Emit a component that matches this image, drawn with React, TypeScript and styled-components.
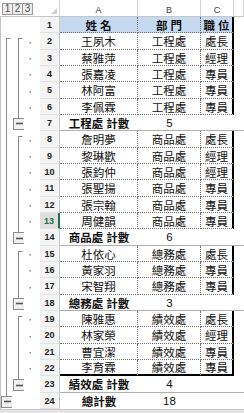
import styled, { createGlobalStyle, css } from "styled-components";

type Lane = "none" | "start" | "line" | "minus" | "dot";
type Kind = "head" | "detail" | "sub" | "total";

type RowData = {
  n: number;
  a: string;
  b?: string;
  c?: string;
  kind: Kind;
  l1: Lane;
  l2: Lane;
  l3: Lane;
  last?: boolean;
};

const groups = [
  {
    dept: "工程處",
    people: [
      ["王夙木", "處長"],
      ["蔡雅萍", "經理"],
      ["張嘉凌", "專員"],
      ["林阿富", "專員"],
      ["李佩霖", "專員"],
    ],
  },
  {
    dept: "商品處",
    people: [
      ["詹明夢", "處長"],
      ["黎琳歡", "經理"],
      ["張鈞仲", "經理"],
      ["張聖揚", "專員"],
      ["張宗翰", "專員"],
      ["周健韻", "專員"],
    ],
  },
  {
    dept: "總務處",
    people: [
      ["杜依心", "處長"],
      ["黃家羽", "專員"],
      ["宋智翔", "專員"],
    ],
  },
  {
    dept: "績效處",
    people: [
      ["陳雅惠", "處長"],
      ["林家榮", "經理"],
      ["曹宜潔", "專員"],
      ["李育霖", "專員"],
    ],
  },
];

function buildRows(): RowData[] {
  const rows: RowData[] = [
    { n: 1, a: "姓 名", b: "部 門", c: "職 位", kind: "head", l1: "none", l2: "none", l3: "none" },
  ];
  let n = 2;
  let total = 0;
  groups.forEach((g, gi) => {
    g.people.forEach(([name, title], i) => {
      rows.push({
        n: n++,
        a: name,
        b: g.dept,
        c: title,
        kind: "detail",
        l1: n === 3 ? "start" : "line",
        l2: i === 0 ? "start" : "line",
        l3: "dot",
        last: gi === groups.length - 1 && i === g.people.length - 1,
      });
    });
    total += g.people.length;
    rows.push({
      n: n++,
      a: `${g.dept} 計數`,
      b: String(g.people.length),
      kind: "sub",
      l1: "line",
      l2: "minus",
      l3: "none",
    });
  });
  rows.push({ n: n++, a: "總計數", b: String(total), kind: "total", l1: "minus", l2: "none", l3: "none" });
  return rows;
}

const ROWS = buildRows();
const rowHeight = (i: number) => Math.round((i + 1) * 16.33) - Math.round(i * 16.33);

const GlobalStyle = createGlobalStyle`
  html, body {
    margin: 0;
    padding: 0;
    background: #ffffff;
    overflow: hidden;
  }
  body {
    font-family: "Liberation Sans", "Noto Sans CJK TC", sans-serif;
  }
`;

const Sheet = styled.div`
  width: 244px;
  height: 413px;
  display: flex;
  flex-direction: column;
  background: #fff;
`;

const HeaderRow = styled.div`
  display: flex;
  height: 17px;
  flex-shrink: 0;
  border-bottom: 1px solid #c6c6c6;
  box-sizing: border-box;
`;

const LevelBar = styled.div`
  width: 40px;
  display: flex;
  align-items: flex-start;
  padding: 3px 0 0 2px;
  box-sizing: border-box;
`;

const LevelButton = styled.div`
  width: 11px;
  height: 12px;
  box-sizing: border-box;
  border: 1px solid #9a9a9a;
  margin-left: -1px;
  background: #ececec;
  color: #505050;
  font-size: 10px;
  line-height: 10px;
  text-align: center;

  &:first-child {
    margin-left: 0;
  }
`;

const Corner = styled.div`
  width: 20px;
  display: flex;
  align-items: flex-end;
  justify-content: flex-end;
  padding: 0 2px 2px 0;
  box-sizing: border-box;
  border-right: 1px solid #d4d4d4;
`;

const CornerTriangle = styled.div`
  width: 0;
  height: 0;
  border-left: 6px solid transparent;
  border-bottom: 6px solid #cfcfcf;
`;

const ColHead = styled.div<{ $w?: number }>`
  ${(p) => (p.$w ? css`width: ${p.$w}px;` : css`flex: 1;`)}
  box-sizing: border-box;
  border-right: 1px solid #d4d4d4;
  display: flex;
  align-items: flex-end;
  justify-content: center;
  padding-bottom: 1px;
  font-size: 9px;
  color: #444;
`;

const Row = styled.div`
  display: flex;
  flex-shrink: 0;
`;

const Outline = styled.div`
  width: 40px;
  display: flex;
  box-sizing: border-box;
  border-left: 1px solid #c4c4c4;
`;

const RowHead = styled.div<{ $active?: boolean }>`
  width: 20px;
  box-sizing: border-box;
  display: flex;
  align-items: center;
  justify-content: center;
  font-size: 9px;
  font-weight: bold;
  color: #222;
  background: #f4f4f4;
  border-bottom: 1px solid #e2e2e2;
  border-right: 1px solid #c6c6c6;

  ${(p) =>
    p.$active &&
    css`
      background: #dedede;
      color: #217346;
      border-right: 2px solid #217346;
    `}
`;

const Cell = styled.div<{ $w?: number; $kind: Kind; $col: "a" | "b" | "c" | "rest"; $last?: boolean }>`
  ${(p) => (p.$w ? css`width: ${p.$w}px;` : css`flex: 1;`)}
  box-sizing: border-box;
  display: flex;
  align-items: center;
  justify-content: center;
  white-space: nowrap;
  font-size: 11.5px;
  color: #111;

  ${(p) =>
    (p.$kind === "head" || p.$kind === "detail") &&
    p.$col !== "rest" &&
    css`
      border-bottom: ${p.$last ? "2px solid #000" : "1px dotted #6f6f6f"};
      border-right: ${p.$col === "c" ? "2px solid #000" : "1px dotted #6f6f6f"};
    `}

  ${(p) =>
    p.$kind === "head" &&
    p.$col !== "rest" &&
    css`
      background: #c5d9f1;
      font-weight: bold;
    `}

  ${(p) =>
    p.$kind === "sub" &&
    css`
      border-bottom: 1px solid #b0b0b0;
    `}

  ${(p) =>
    (p.$kind === "sub" || p.$kind === "total") &&
    p.$col === "a" &&
    css`
      font-weight: bold;
    `}
`;

const BottomStrip = styled.div`
  flex: 1;
  background: #e4e4e4;
  border-top: 1px solid #c8c8c8;
`;

function OutlineLane({ kind, width, cx, height }: { kind: Lane; width: number; cx: number; height: number }) {
  const mid = height / 2;
  return (
    <svg width={width} height={height} style={{ display: "block", flexShrink: 0 }}>
      {kind === "line" && <line x1={cx} y1={0} x2={cx} y2={height} stroke="#8a8a8a" strokeWidth={1} />}
      {kind === "start" && (
        <>
          <line x1={cx} y1={5} x2={cx} y2={height} stroke="#8a8a8a" strokeWidth={1} />
          <line x1={cx} y1={5.5} x2={cx + 4} y2={5.5} stroke="#8a8a8a" strokeWidth={1} />
        </>
      )}
      {kind === "minus" && (
        <>
          <line x1={cx} y1={0} x2={cx} y2={mid - 5} stroke="#8a8a8a" strokeWidth={1} />
          <rect x={cx - 5} y={Math.round(mid - 5.5) + 0.5} width={11} height={11} fill="#f0f0f0" stroke="#8c8c8c" />
          <line x1={cx - 2.5} y1={Math.round(mid) + 0.5} x2={cx + 4.5} y2={Math.round(mid) + 0.5} stroke="#555" strokeWidth={1.6} />
        </>
      )}
      {kind === "dot" && <rect x={cx - 0.5} y={Math.round(mid)} width={1.5} height={1.5} fill="#8a8a8a" />}
    </svg>
  );
}

export default function App() {
  return (
    <>
      <GlobalStyle />
      <Sheet>
        <HeaderRow>
          <LevelBar>
            <LevelButton>1</LevelButton>
            <LevelButton>2</LevelButton>
            <LevelButton>3</LevelButton>
          </LevelBar>
          <Corner>
            <CornerTriangle />
          </Corner>
          <ColHead $w={78}>A</ColHead>
          <ColHead $w={63}>B</ColHead>
          <ColHead $w={33}>C</ColHead>
          <ColHead />
        </HeaderRow>

        {ROWS.map((r, i) => {
          const h = rowHeight(i);
          return (
            <Row key={r.n} style={{ height: h }}>
              <Outline>
                <OutlineLane kind={r.l1} width={11} cx={5.5} height={h} />
                <OutlineLane kind={r.l2} width={12} cx={6.5} height={h} />
                <OutlineLane kind={r.l3} width={16} cx={6} height={h} />
              </Outline>
              <RowHead $active={r.n === 13}>{r.n}</RowHead>
              <Cell $w={78} $kind={r.kind} $col="a" $last={r.last}>
                {r.a}
              </Cell>
              <Cell $w={63} $kind={r.kind} $col="b" $last={r.last}>
                {r.b}
              </Cell>
              <Cell $w={33} $kind={r.kind} $col="c" $last={r.last}>
                {r.c}
              </Cell>
              <Cell $kind={r.kind} $col="rest" />
            </Row>
          );
        })}
        <BottomStrip />
      </Sheet>
    </>
  );
}
